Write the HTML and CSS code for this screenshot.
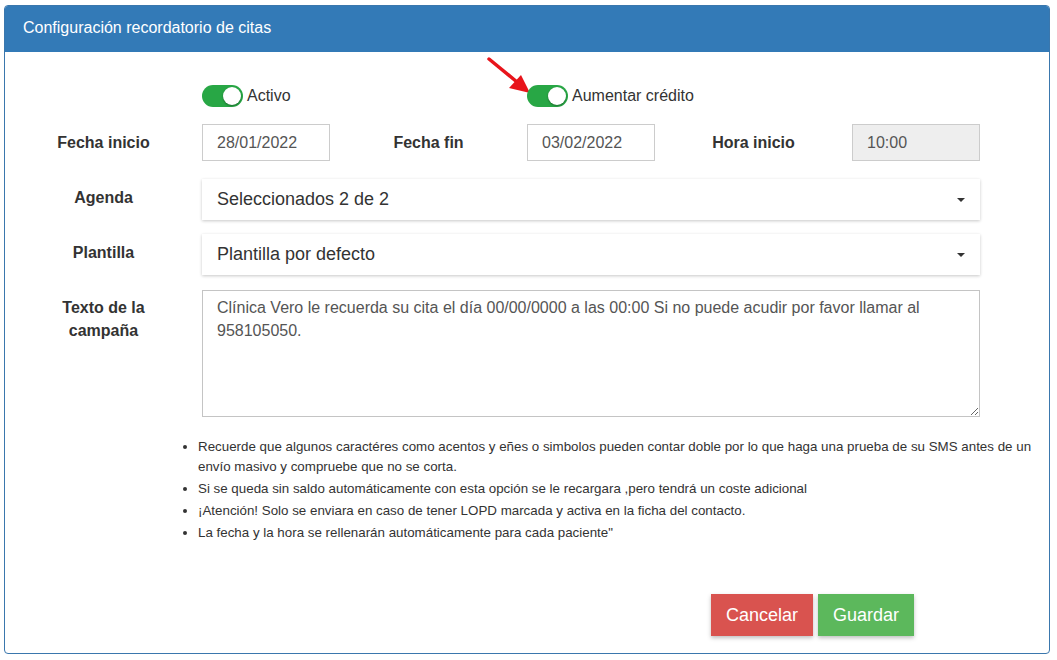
FILE: index.html
```html
<!DOCTYPE html>
<html lang="es">
<head>
  <meta charset="UTF-8">
  <title>Configuración recordatorio de citas</title>
  <link rel="stylesheet" href="styles.css">
</head>
<body>
  <div class="panel">
    <div class="panel-heading">Configuración recordatorio de citas</div>
    <div class="panel-body">

      <!-- flecha roja que apunta al switch -->
      <svg class="arrow" width="60" height="50" viewBox="0 0 60 50">
        <line x1="3" y1="3" x2="31" y2="26" stroke="#e8141b" stroke-width="3.5" stroke-linecap="round"/>
        <polygon points="44,37 23,32 35,19" fill="#e8141b"/>
      </svg>

      <div class="row row-toggles">
        <label class="switch col-2">
          <span class="toggle on"><span class="knob"></span></span>
          <span>Activo</span>
        </label>
        <label class="switch col-4">
          <span class="toggle on"><span class="knob"></span></span>
          <span>Aumentar crédito</span>
        </label>
      </div>

      <div class="row row-dates">
        <div class="lbl">Fecha inicio</div>
        <input class="field" type="text" value="28/01/2022">
        <div class="lbl">Fecha fin</div>
        <input class="field" type="text" value="03/02/2022">
        <div class="lbl">Hora inicio</div>
        <input class="field disabled" type="text" value="10:00" disabled>
      </div>

      <div class="row row-select">
        <div class="lbl lbl-up">Agenda</div>
        <div class="select">
          <span>Seleccionados 2 de 2</span>
          <span class="caret"></span>
        </div>
      </div>

      <div class="row row-select row-plantilla">
        <div class="lbl lbl-up">Plantilla</div>
        <div class="select">
          <span>Plantilla por defecto</span>
          <span class="caret"></span>
        </div>
      </div>

      <div class="row row-text">
        <div class="lbl lbl-top">Texto de la<br>campaña</div>
        <textarea class="texto">Clínica Vero le recuerda su cita el día 00/00/0000 a las 00:00 Si no puede acudir por favor llamar al 958105050.</textarea>
      </div>

      <ul class="notes">
        <li>Recuerde que algunos caractéres como acentos y eñes o simbolos pueden contar doble por lo que haga una prueba de su SMS antes de un envío masivo y compruebe que no se corta.</li>
        <li>Si se queda sin saldo automáticamente con esta opción se le recargara ,pero tendrá un coste adicional</li>
        <li>¡Atención! Solo se enviara en caso de tener LOPD marcada y activa en la ficha del contacto.</li>
        <li>La fecha y la hora se rellenarán automáticamente para cada paciente"</li>
      </ul>

      <div class="actions">
        <button class="btn btn-danger">Cancelar</button>
        <button class="btn btn-success">Guardar</button>
      </div>
    </div>
  </div>
</body>
</html>
```

FILE: styles.css
```css
body {
  margin: 0;
  padding: 5px 0 0 4px;
  background: #fff;
  font-family: "Liberation Sans", Arial, sans-serif;
  color: #333;
}

.panel {
  width: 1044px;
  height: 647px;
  border: 1px solid #3a77ad;
  border-radius: 4px;
  background: #fff;
  display: flex;
  flex-direction: column;
  overflow: hidden;
}

.panel-heading {
  height: 46px;
  line-height: 44px;
  padding-left: 18px;
  background: #337ab7;
  color: #fff;
  font-size: 16px;
}

.panel-body {
  position: relative;
  flex: 1;
  padding-top: 33px;
  display: flex;
  flex-direction: column;
}

.arrow {
  position: absolute;
  left: 481px;
  top: 4px;
}

.row {
  display: grid;
  grid-template-columns: 197px 128px 197px 128px 197px 128px;
}

.row-toggles {
  height: 22px;
  margin-bottom: 17px;
}

.switch {
  display: flex;
  align-items: center;
  gap: 4px;
  font-size: 16px;
  color: #333;
  white-space: nowrap;
}

.col-2 { grid-column: 2; }
.col-4 { grid-column: 4; }

.toggle {
  position: relative;
  width: 41px;
  height: 22px;
  border-radius: 11px;
  background: #e0e0e0;
  flex: none;
}

.toggle.on {
  background: #28a745;
}

.knob {
  position: absolute;
  top: 2px;
  right: 2px;
  width: 18px;
  height: 18px;
  border-radius: 50%;
  background: #fff;
  box-shadow: 0 1px 2px rgba(0, 0, 0, 0.35);
}

.lbl {
  font-weight: bold;
  font-size: 16px;
  text-align: center;
  align-self: center;
  color: #333;
}

.lbl-up {
  padding-bottom: 4px;
}

.lbl-top {
  align-self: start;
  padding-top: 6px;
  line-height: 23px;
}

.row-dates {
  height: 37px;
  margin-bottom: 18px;
}

.field {
  box-sizing: border-box;
  width: 128px;
  height: 37px;
  padding: 0 14px;
  border: 1px solid #ccc;
  font-family: inherit;
  font-size: 16px;
  color: #555;
  background: #fff;
}

.field.disabled {
  background: #eee;
  color: #555;
  -webkit-text-fill-color: #555;
}

.row-select {
  height: 41px;
  margin-bottom: 14px;
}

.row-plantilla {
  margin-bottom: 15px;
}

.select {
  grid-column: 2 / 7;
  display: flex;
  align-items: center;
  justify-content: space-between;
  padding: 0 15px;
  font-size: 18px;
  color: #333;
  background: #fff;
  box-shadow: 0 1px 3px rgba(0, 0, 0, 0.22);
}

.caret {
  width: 0;
  height: 0;
  border-left: 4px solid transparent;
  border-right: 4px solid transparent;
  border-top: 4px solid #333;
}

.row-text {
  height: 127px;
}

.texto {
  grid-column: 2 / 7;
  box-sizing: border-box;
  height: 127px;
  padding: 5px 14px;
  border: 1px solid #c4c4c4;
  font-family: inherit;
  font-size: 16px;
  line-height: 23px;
  color: #555;
  resize: vertical;
}

.notes {
  margin: 20px 0 0 0;
  padding: 0 15px 0 193px;
  font-size: 13.35px;
  line-height: 20px;
  color: #333;
}

.notes li {
  margin-bottom: 2px;
}

.actions {
  margin-top: auto;
  margin-bottom: 17px;
  display: flex;
  justify-content: flex-end;
  gap: 5px;
  padding-right: 135px;
}

.btn {
  height: 42px;
  padding: 0 15px;
  border: none;
  font-family: inherit;
  font-size: 18px;
  color: #fff;
  box-shadow: 0 2px 4px rgba(0, 0, 0, 0.25);
  cursor: pointer;
}

.btn-danger {
  background: #d9534f;
}

.btn-success {
  background: #5cb85c;
}
```
